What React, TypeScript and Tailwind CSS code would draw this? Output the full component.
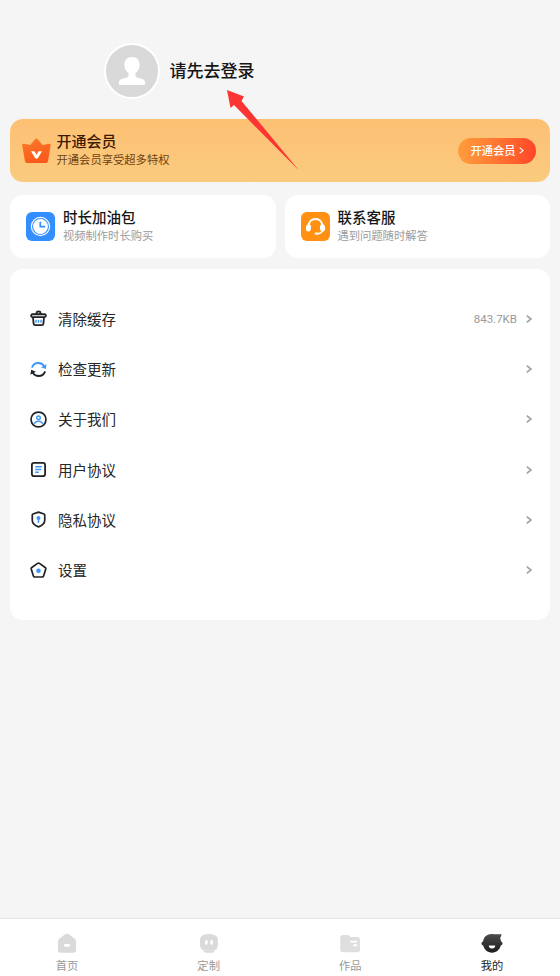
import React from 'react'

interface IconProps {
  className?: string
}

interface MenuRowProps {
  icon: React.ReactNode
  title: string
  value?: string
}

interface ServiceCardProps {
  icon: React.ReactNode
  title: string
  desc: string
}

interface TabProps {
  icon: React.ReactNode
  title: string
  active?: boolean
}

const DARK = '#202226'
const BLUE = '#3b97f8'

function AvatarIcon() {
  return (
    <svg className="size-[28px]" viewBox="0 0 28 28" fill="#fff">
      <path d="M14 0C9.300 0 6.300 3.200 6.300 7.800c0 3.500 1.700 6.700 4.200 8.300v2.500c0 1-.6 1.500-1.600 1.800l-5.300 1.700C1.800 22.800.9 24 .9 25.800v1.400c0 .5.3.8.8.8h24.600c.5 0 .8-.3.800-.8v-1.400c0-1.800-.9-3-2.700-3.700l-5.300-1.700c-1-.3-1.600-.8-1.600-1.800v-2.500c2.500-1.600 4.200-4.800 4.200-8.300C21.700 3.200 18.700 0 14 0z" />
    </svg>
  )
}

function CrownIcon() {
  return (
    <svg className="h-[26px] w-[29px]" viewBox="0 0 29 26" fill="none">
      <defs>
        <linearGradient id="crown" x1="0" y1="0" x2="0.3" y2="1">
          <stop offset="0" stopColor="#fb7a2a" />
          <stop offset="1" stopColor="#fb5a1a" />
        </linearGradient>
      </defs>
      <path
        d="M13 1.200c.8-.9 1.900-.9 2.700 0l4.900 5.700 6.500-1.200c1.100-.2 1.700.5 1.500 1.600l-2.500 15.500c-.2 1.500-1.200 2.300-2.600 2.300h-18c-1.400 0-2.400-.8-2.600-2.300L.2 7.300C0 6.200.7 5.500 1.800 5.700l6.400 1.200z"
        fill="url(#crown)"
      />
      <path d="M9 13.200h3c.4 0 .7.200.8.500l1.700 3 1.700-3c.2-.3.5-.5.800-.5h3l-4 6.700c-.7 1.100-2.200 1.100-2.900 0z" fill="#fff" />
    </svg>
  )
}

function ClockIcon() {
  return (
    <svg className="size-[29px] shrink-0" viewBox="0 0 29 29" fill="none">
      <rect width="29" height="29" rx="6" fill="#338fff" />
      <circle cx="14.500" cy="14.500" r="9.100" stroke="#fff" strokeWidth="1.200" />
      <circle cx="14.500" cy="14.500" r="7.400" fill="#fff" />
      <path d="M14.300 9.800v4.900h4.900" stroke="#338fff" strokeWidth="1.700" />
    </svg>
  )
}

function HeadsetIcon() {
  return (
    <svg className="size-[29px] shrink-0" viewBox="0 0 29 29" fill="none">
      <rect width="29" height="29" rx="6" fill="#ff9012" />
      <path d="M7.700 14c0-4.200 2.800-7 6.800-7s6.800 2.800 6.800 7" stroke="#fff" strokeWidth="2" />
      <path d="M22 17.500c-.6 2.600-2.600 4.200-6.200 4.400" stroke="#fff" strokeWidth="1.300" />
      <rect x="5" y="12.300" width="5" height="7.200" rx="2.300" fill="#fff" transform="rotate(8 7.400 15.800)" />
      <rect x="19" y="12.300" width="5" height="7.200" rx="2.300" fill="#fff" transform="rotate(-8 21.600 15.800)" />
      <rect x="13.700" y="20.500" width="4" height="2.300" rx="1.100" fill="#fff" />
    </svg>
  )
}

function CleanIcon() {
  return (
    <svg className="size-[17px]" viewBox="0 0 18 18" fill="none" stroke={DARK} strokeWidth="1.900">
      <path d="M7 4.500V2.900C7 2 7.700 1.500 9 1.500s2 .5 2 1.400v1.600" />
      <rect x="1.200" y="4.500" width="15.600" height="3" rx="1.300" />
      <path d="M3.200 8l.6 6.400c.1 1.200.7 1.700 1.800 1.700h6.800c1.100 0 1.700-.5 1.800-1.700l.6-6.400" />
      <path d="M6.300 10.200v3.200M9 10.200v3.200M11.700 10.200v3.200" stroke={BLUE} strokeWidth="1.500" />
    </svg>
  )
}

function RefreshIcon() {
  return (
    <svg className="size-[17px]" viewBox="0 0 18 18" fill="none" strokeWidth="1.900">
      <path d="M2 7c1-2.900 3.600-4.900 6.900-4.900 2.600 0 4.700 1.200 6.100 3.200" stroke={BLUE} />
      <path d="M17.500 3.400l-.8 5.200-5-2z" fill={BLUE} />
      <path d="M16 11c-1 2.900-3.600 4.900-6.900 4.900-2.600 0-4.700-1.200-6.100-3.200" stroke={DARK} />
      <path d="M.4 14.500l.9-5.200 5 2z" fill={DARK} />
    </svg>
  )
}

function AboutIcon() {
  return (
    <svg className="size-[17px]" viewBox="0 0 18 18" fill="none">
      <circle cx="9" cy="9" r="7.900" stroke={DARK} strokeWidth="1.800" />
      <circle cx="9" cy="7.200" r="1.900" stroke={BLUE} strokeWidth="1.500" />
      <path d="M4.500 13.500c.8-1.800 2.300-2.700 4.500-2.700s3.700.9 4.500 2.700" stroke={BLUE} strokeWidth="1.500" />
    </svg>
  )
}

function DocIcon() {
  return (
    <svg className="size-[17px]" viewBox="0 0 18 18" fill="none" strokeWidth="1.900">
      <rect x="2" y="2" width="14" height="14" rx="2.300" stroke={DARK} />
      <path d="M5.500 6h7M5.500 9h6.300M5.500 12h3.800" stroke={BLUE} strokeWidth="1.600" />
    </svg>
  )
}

function ShieldIcon() {
  return (
    <svg className="size-[17px]" viewBox="0 0 18 18" fill="none">
      <path
        d="M9 1.200l5.800 2c.5.200.8.600.8 1.100v5.500c0 3.200-2.700 5.500-6.600 7-3.900-1.500-6.600-3.800-6.600-7V4.300c0-.5.3-.9.8-1.100z"
        stroke={DARK}
        strokeWidth="1.800"
        strokeLinejoin="round"
      />
      <circle cx="9" cy="7.300" r="2.100" fill={BLUE} />
      <path d="M9 8v4.600" stroke={BLUE} strokeWidth="1.600" />
    </svg>
  )
}

function SettingIcon() {
  return (
    <svg className="size-[17px]" viewBox="0 0 18 18" fill="none">
      <path
        d="M8 1.500c.7-.5 1.300-.5 2 0l6.100 4.300c.6.400.8 1 .6 1.700l-2.300 7.300c-.2.800-.7 1.100-1.500 1.100H5.100c-.8 0-1.300-.3-1.500-1.100L1.300 7.500c-.2-.7 0-1.300.6-1.700z"
        stroke={DARK}
        strokeWidth="1.800"
      />
      <circle cx="9" cy="9.200" r="2.400" fill={BLUE} />
    </svg>
  )
}

function ArrowIcon({ className }: IconProps) {
  return (
    <svg className={className} viewBox="0 0 6 8" fill="none" stroke="currentColor">
      <path d="M.8.6L4.900 4 .8 7.400" />
    </svg>
  )
}

function HomeIcon() {
  return (
    <svg className="size-[22px]" viewBox="0 0 22 22">
      <path
        d="M8.600 1.600c1.500-1.200 3.300-1.200 4.800 0l5.300 4.200c1.200.9 1.800 2 1.800 3.400v8.700c0 1.800-1 2.800-2.800 2.800H4.300c-1.800 0-2.800-1-2.800-2.800V9.200c0-1.400.6-2.500 1.800-3.400z"
        fill="#dadada"
      />
      <rect x="7.800" y="11.600" width="6.400" height="2.800" rx="1.200" fill="#fff" />
    </svg>
  )
}

function RobotIcon() {
  return (
    <svg className="size-[22px]" viewBox="0 0 22 22">
      <path
        d="M6 1.900c3.300-1 6.700-1 10 0 2.900.9 4.400 2.800 4.400 5.700v4.400c0 3-1.200 5.100-3.500 6.200-.3 1.700-1.200 2.500-2.800 2.500H7.900c-1.600 0-2.500-.8-2.800-2.500-2.300-1.100-3.500-3.200-3.500-6.200V7.600c0-2.900 1.500-4.800 4.400-5.700z"
        fill="#dadada"
      />
      <path d="M5.300 18.200h11.400" stroke="#e6e6e6" strokeWidth=".7" />
      <rect x="6.900" y="7.400" width="2.700" height="4.900" rx="1.300" fill="#fff" />
      <rect x="12.400" y="7.400" width="2.700" height="4.900" rx="1.300" fill="#fff" />
    </svg>
  )
}

function FolderIcon() {
  return (
    <svg className="size-[22px]" viewBox="0 0 22 22">
      <path
        d="M3.400 2h5.100c.9 0 1.600.3 2.200 1l.9 1.100h7.200c1.700 0 2.600.9 2.600 2.600v10.800c0 1.700-.9 2.600-2.600 2.600H3.400C1.700 20.100.8 19.200.8 17.500V4.600C.8 2.900 1.700 2 3.400 2z"
        fill="#dedede"
      />
      <path d="M11.400 9h7M14.400 12.900h4" stroke="#fff" strokeWidth="2" />
    </svg>
  )
}

function MineIcon() {
  return (
    <svg className="size-[22px]" viewBox="0 0 22 22">
      <defs>
        <linearGradient id="mine" x1="0" y1="0" x2="0" y2="1">
          <stop offset="0" stopColor="#4c4c4c" />
          <stop offset="1" stopColor="#1c1c1c" />
        </linearGradient>
      </defs>
      <path
        d="M20.900 1.100c-.1 1.700-.6 3.200-1.400 4.400.6 1 .9 2.200 1 3.500 1 .4 1.500 1.100 1.500 2.100s-.7 1.800-1.800 2.100c-1.200 4.500-4.600 7.400-9.200 7.400s-8-2.900-9.200-7.400C.7 12.900 0 12.100 0 11.100S.6 9.400 1.600 9C2.200 4.100 6 1.100 10.700 1.100c3.500 0 6.700.6 10.200 0z"
        fill="url(#mine)"
      />
      <path d="M7.600 13h6.800c0 2-1.300 3.200-3.400 3.200S7.600 15 7.600 13z" fill="#fff" />
    </svg>
  )
}

function ServiceCard({ icon, title, desc }: ServiceCardProps) {
  return (
    <div className="flex h-[63px] flex-1 items-center gap-[7.500px] rounded-[13px] bg-white pl-[16.400px]">
      {icon}
      <div className="flex flex-col pb-[2px]">
        <h3 className="text-[14.500px] leading-[20px] font-medium text-[#161616]">{title}</h3>
        <p className="text-[11.300px] leading-[17px] text-[#9b9b9b]">{desc}</p>
      </div>
    </div>
  )
}

function MenuRow({ icon, title, value }: MenuRowProps) {
  return (
    <li className="flex h-[50.300px] items-center pr-[18px] pl-5">
      {icon}
      <span className="ml-[11px] flex-1 text-[14.500px] leading-5 text-[#262626]">{title}</span>
      {value && <span className="mr-[9px] pt-[2px] font-[Roboto] text-[11.500px] text-[#999]">{value}</span>}
      <ArrowIcon className="h-[8px] w-[6px] stroke-[1.700] text-[#a6a6a6]" />
    </li>
  )
}

function Tab({ icon, title, active }: TabProps) {
  return (
    <button className="flex w-10 flex-col items-center">
      {icon}
      <span className={active ? 'text-[11.300px] leading-[22px] text-[#222]' : 'text-[11.300px] leading-[22px] text-[#999]'}>
        {title}
      </span>
    </button>
  )
}

function App() {
  return (
    <div className="relative flex h-[976px] w-[560px] flex-col overflow-hidden bg-[#f5f5f5] font-['Noto_Sans_CJK_SC',sans-serif]">
      <header className="flex h-[119px] items-center gap-[9.500px] pt-[23px] pl-[104px]">
        <div className="flex size-[56px] items-center justify-center rounded-full border-2 border-white bg-[#d9d9d9]">
          <AvatarIcon />
        </div>
        <h1 className="pb-[2px] text-[17px] leading-6 font-medium text-[#161616]">请先去登录</h1>
      </header>

      <main className="flex flex-1 flex-col px-[10px]">
        <section className="flex h-[63px] items-center rounded-[13px] bg-linear-to-b from-[#fdc073] to-[#facb7f] pr-[14px] pl-3">
          <CrownIcon />
          <div className="ml-[5.500px] flex flex-1 flex-col pb-[3px]">
            <h2 className="text-[15px] leading-[20px] font-medium text-[#3d1904]">开通会员</h2>
            <p className="text-[11.300px] leading-[16px] text-[#6e4212]">开通会员享受超多特权</p>
          </div>
          <button className="flex h-[26px] w-[78px] items-center justify-center gap-[3px] rounded-full bg-linear-to-r from-[#ff9d3c] to-[#ff4328] text-[11.300px] font-medium text-white">
            开通会员
            <ArrowIcon className="h-[7px] w-[5px] stroke-[1.300]" />
          </button>
        </section>

        <section className="mt-[13px] flex gap-[9px]">
          <ServiceCard icon={<ClockIcon />} title="时长加油包" desc="视频制作时长购买" />
          <ServiceCard icon={<HeadsetIcon />} title="联系客服" desc="遇到问题随时解答" />
        </section>

        <ul className="mt-[11px] h-[351px] rounded-[13px] bg-white pt-[24.600px]">
          <MenuRow icon={<CleanIcon />} title="清除缓存" value="843.7KB" />
          <MenuRow icon={<RefreshIcon />} title="检查更新" />
          <MenuRow icon={<AboutIcon />} title="关于我们" />
          <MenuRow icon={<DocIcon />} title="用户协议" />
          <MenuRow icon={<ShieldIcon />} title="隐私协议" />
          <MenuRow icon={<SettingIcon />} title="设置" />
        </ul>
      </main>

      <nav className="flex h-[58px] justify-between border-t border-[#e6e6e6] bg-white pt-[14px] pr-[48px] pl-[47px]">
        <Tab icon={<HomeIcon />} title="首页" />
        <Tab icon={<RobotIcon />} title="定制" />
        <Tab icon={<FolderIcon />} title="作品" />
        <Tab icon={<MineIcon />} title="我的" active />
      </nav>

      {/* pointer to the login entry */}
      <svg className="absolute top-[89px] left-[226px] h-[82px] w-[74px]" viewBox="0 0 74 82">
        <path d="M1 1l17 6.500-2.500 4.500L73 81.500 8 16l-3.500 3z" fill="#fb3434" />
      </svg>
    </div>
  )
}

export default App
